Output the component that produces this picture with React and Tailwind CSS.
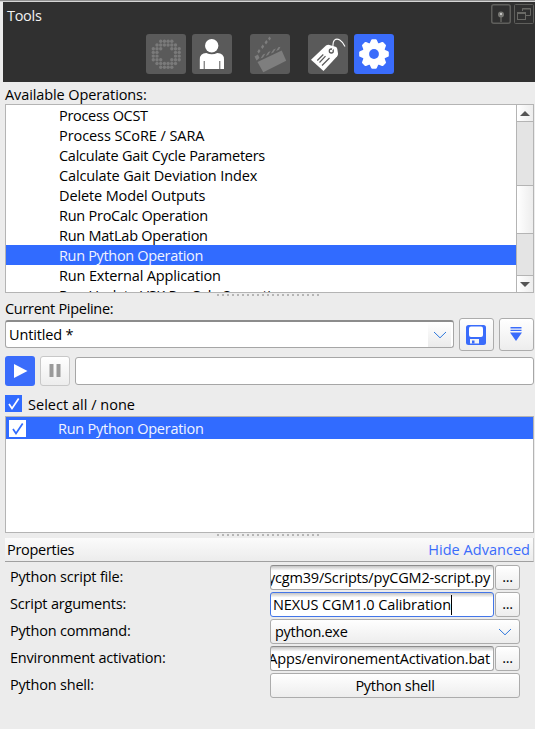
import { useState } from "react";

const operations = [
  ["Process OCST", "tracking-[-0.3px]"],
  ["Process SCoRE / SARA", "tracking-[-0.08px]"],
  ["Calculate Gait Cycle Parameters", "tracking-[-0.26px]"],
  ["Calculate Gait Deviation Index", "tracking-[-0.13px]"],
  ["Delete Model Outputs", "tracking-[-0.13px]"],
  ["Run ProCalc Operation", "tracking-[-0.25px]"],
  ["Run MatLab Operation", "tracking-[-0.25px]"],
  ["Run Python Operation", "tracking-[-0.33px]"],
  ["Run External Application", "tracking-[-0.15px]"],
  ["Run Update VSK ProCalc Operation", "tracking-[-0.25px]"],
];

// Volume ring drawn as rows of dots; x marks a dot.
const ring = [
  "..xxxx..",
  ".xxxxxx.",
  "xxx..xxx",
  "xx....xx",
  "xx....xx",
  "xxx..xxx",
  ".xxxxxx.",
  "..xxxx..",
];

function RingIcon() {
  return (
    <svg width="40" height="40" viewBox="0 0 40 40" fill="#7a7a7a">
      {ring.flatMap((row, y) =>
        [...row].map((c, x) =>
          c === "x" ? <circle key={`${x}-${y}`} cx={7.3 + x * 3.7} cy={7.3 + y * 3.7} r="1.7" /> : null
        )
      )}
    </svg>
  );
}

function PersonIcon() {
  return (
    <svg width="40" height="40" viewBox="0 0 40 40" fill="#fff">
      <circle cx="19.7" cy="11.7" r="6.7" />
      <path d="M7.8 35V25.500q0-6.500 6.500-6.500q5.500 2.500 11 0q6.700 0 6.700 6.500V35H28.300V27H27.300V35H12.700V27H11.700V35Z" />
    </svg>
  );
}

function ClapperIcon() {
  return (
    <svg width="40" height="40" viewBox="0 0 40 40" fill="#7e7e7e">
      <path d="M7.500 28L31.700 16.500L36.200 26.800L13.300 38.300Z" />
      <path d="M4.500 22.500L8 20.500L9.500 24L6.500 26.500Z" />
      <path d="M7.300 17.500L9 15L10.500 17L8.700 19.500ZM11 13L12.700 10.500L14.200 12.500L12.400 15ZM14.600 8.500L16.300 6L17.800 8L16 10.500ZM18 4.500L19.500 2.500L21 4.500L19.500 6.500Z" />
      <path d="M10.500 24.500L13 20.500L15.500 19.500L13 23.500ZM15.700 22L18.200 18L20.700 17L18.200 21ZM20.900 19.500L23.400 15.500L25.900 14.500L23.400 18.500ZM26.100 17L28.300 13.300L30.500 12.800L29 15.700Z" />
    </svg>
  );
}

function TagIcon() {
  return (
    <svg width="40" height="40" viewBox="0 0 40 40" fill="none">
      <path d="M3 25.800L18 11.600Q19 10.700 20.500 10.700L27.500 12.800Q29 13.300 29.300 15L30 19.500Q30.200 21 29.200 22.200L15.500 37Z" fill="#fff" />
      <circle cx="23.300" cy="17" r="2" stroke="#5a5a5a" strokeWidth="1.300" />
      <path d="M9.300 26.500L15.300 20.500M11.500 28.500L17.500 22.200M14 31.500L21.500 24" stroke="#5a5a5a" strokeWidth="1.200" />
      <path d="M24.500 16C25.500 13 24 8.500 26.500 6.200C29.500 3.500 34 6.500 37 12.500" stroke="#fff" strokeWidth="1.100" />
    </svg>
  );
}

function GearIcon() {
  return (
    <svg width="40" height="40" viewBox="0 0 40 40">
      <g transform="translate(20 20)">
        <circle r="11.300" fill="#fff" />
        {[0, 45, 90, 135, 180, 225, 270, 315].map((a) => (
          <path key={a} transform={`rotate(${a})`} d="M-4.800 -9.500L-2.800 -14Q-2.500 -14.800 -1.700 -14.800H1.700Q2.500 -14.800 2.800 -14L4.800 -9.500Z" fill="#fff" />
        ))}
        <circle r="4.900" fill="#3a6cfb" />
      </g>
    </svg>
  );
}

function Check({ inverse }) {
  return (
    <svg width="17" height="17" viewBox="0 0 17 17" className={inverse ? "shrink-0 bg-white" : "shrink-0 bg-[#316bff]"}>
      <path d="M4 9L7 13.500L13.700 3.500" fill="none" stroke={inverse ? "#316bff" : "#fff"} strokeWidth="1.700" />
    </svg>
  );
}

function Grip() {
  return (
    <div className="flex h-[2px] w-full justify-center gap-[3px]">
      {Array.from({ length: 21 }, (_, i) => (
        <i key={i} className="size-[2px] bg-[#b5b5b5]" />
      ))}
    </div>
  );
}

function Chevron() {
  return (
    <svg width="14" height="8" viewBox="0 0 14 8" fill="none" stroke="#2f78dc" strokeWidth="1">
      <path d="M1 1L7 6.800L13 1" />
    </svg>
  );
}

const button = "flex items-center justify-center rounded-[3px] border border-[#acacac] bg-linear-to-b from-white to-[#ededed]";
const field = "flex h-[25px] w-[224px] items-center overflow-hidden rounded-[3px] border bg-linear-to-b from-[#c4c4c4] via-white via-20% to-white";

function Row({ label, children }) {
  return (
    <div className="flex h-[27px] items-start">
      <div className="h-[25px] w-[265px] pl-[5px] leading-[23px] tracking-[-0.2px]">{label}</div>
      {children}
    </div>
  );
}

function Browse() {
  return <button className={`${button} ml-px h-[25px] w-[25px] leading-none`}>...</button>;
}

export default function App() {
  const [all, setAll] = useState(true);
  return (
    <div className="flex h-[729px] w-[535px] flex-col overflow-hidden bg-[#ececec] font-['Open_Sans','Noto_Sans',sans-serif] text-[14.5px] leading-[20px] tracking-[-0.3px] [font-stretch:93%] text-black">
      <div className="h-px shrink-0 bg-[#909090]" />
      <div className="h-px shrink-0 bg-[#d5d5d5]" />
      <header className="ml-[3px] h-[80px] shrink-0 bg-[#303030]">
        <div className="flex h-[32px] justify-between pl-[4px] pr-px pt-[2px] text-[#f2f2f2]">
          <span className="pt-[2px]">Tools</span>
          <div className="flex gap-[3px]">
            <svg width="20" height="20" viewBox="0 0 20 20" fill="none">
              <rect x=".75" y=".75" width="18.500" height="18.500" rx="2" stroke="#5f5f5c" strokeWidth="1.500" />
              <path d="M10 11V18" stroke="#6c6c68" strokeWidth="1.300" />
              <circle cx="10" cy="10.500" r="3" fill="#777773" />
              <circle cx="10" cy="10" r="1" fill="#ddd" />
            </svg>
            <svg width="20" height="20" viewBox="0 0 20 20" fill="none" stroke="#696965">
              <rect x=".5" y=".5" width="19" height="19" rx="1" stroke="#5f5f5c" />
              <path d="M8.500 7V4.500H16.500V11.500H12M8 5H17" />
              <rect x="3.500" y="8.500" width="8" height="7" />
              <path d="M3 9.500H12" />
            </svg>
          </div>
        </div>
        <nav className="flex pl-[143px]">
          <button className="size-10 rounded-[3px] bg-[#5a5a5a]"><RingIcon /></button>
          <button className="ml-[6px] size-10 rounded-[3px] bg-[#5a5a5a]"><PersonIcon /></button>
          <button className="ml-[18px] size-10 rounded-[3px] bg-[#5a5a5a]"><ClapperIcon /></button>
          <button className="ml-[18px] size-10 rounded-[3px] bg-[#5a5a5a]"><TagIcon /></button>
          <button className="ml-[6px] size-10 rounded-[3px] bg-[#3a6cfb]"><GearIcon /></button>
        </nav>
      </header>

      <div className="h-[22px] shrink-0 pl-[5px] pt-[3px] tracking-[-0.1px]">Available Operations:</div>
      <section className="ml-[5px] flex h-[189px] w-[529px] shrink-0 border border-[#b4b4b4] bg-white">
        <ul className="h-full flex-1 overflow-hidden">
          {operations.map(([op, tracking]) => (
            <li key={op} className={`h-5 pl-[53px] leading-[22px] ${tracking} ${op === "Run Python Operation" ? "bg-[#316bff] text-[#f0f3ff]" : ""}`}>
              {op}
            </li>
          ))}
        </ul>
        <div className="flex w-[17px] flex-col border-l border-[#b4b4b4] bg-[#e4e4e4]">
          <div className="flex h-[17px] items-center justify-center border-b border-[#b4b4b4] bg-linear-to-r from-white to-[#ededed]">
            <svg width="10" height="5" viewBox="0 0 10 5"><path d="M0 5L5 0L10 5Z" fill="#555" /></svg>
          </div>
          <div className="mt-[63px] h-[49px] border-y border-[#b4b4b4] bg-linear-to-r from-white to-[#ededed]" />
          <div className="mt-auto flex h-[17px] items-center justify-center border-t border-[#b4b4b4] bg-linear-to-r from-white to-[#ededed]">
            <svg width="10" height="5" viewBox="0 0 10 5"><path d="M0 0L5 5L10 0Z" fill="#555" /></svg>
          </div>
        </div>
      </section>
      <div className="h-[5px] shrink-0 pt-px"><Grip /></div>

      <div className="h-[20px] shrink-0 pl-[5px] leading-[22px]">Current Pipeline:</div>
      <div className="flex h-[33px] shrink-0 items-start pl-[5px]">
        <div className="mt-[2px] flex h-[28px] w-[449px] items-center justify-between rounded-[3px] border border-t-2 border-[#a6a6a6] border-t-[#8c8c8c] bg-white pl-[3px] pr-[2px]">
          <span className="tracking-[-0.15px]">Untitled *</span>
          <div className="flex h-full w-[23px] items-center justify-center bg-linear-to-b from-white to-[#ebebeb]"><Chevron /></div>
        </div>
        <button className={`${button} ml-[5px] h-[33px] w-[35px] pr-px`}>
          <svg width="20" height="20" viewBox="0 0 20 20">
            <rect width="20" height="20" rx="2.500" fill="#3a6cfb" />
            <rect x="3" y="1.500" width="14" height="10.500" rx="2" fill="#fff" />
            <rect x="4" y="14" width="9" height="4.500" fill="#f4f4f4" />
            <rect x="6" y="15.500" width="2.500" height="3" fill="#3a6cfb" />
          </svg>
        </button>
        <button className={`${button} ml-[5px] h-[33px] w-[35px] pr-px pb-px`}>
          <svg width="12" height="14" viewBox="0 0 12 14" fill="#3a6cfb">
            <path d="M.500 0H11.500V1H.500ZM.500 3H11.500V4H.500ZM0 5.500H12L6 14Z" />
            <path d="M.500 1H11.500V2.500H.500Z" opacity=".5" />
          </svg>
        </button>
      </div>
      <div className="flex h-[44px] shrink-0 items-start pl-[5px] pt-[5px]">
        <button className="flex size-[30px] items-center justify-center rounded-[3px] bg-[#3a6cfb]">
          <svg width="14" height="14" viewBox="0 0 14 14" className="ml-[2px]"><path d="M0 0L13.500 7L0 14Z" fill="#fff" /></svg>
        </button>
        <button className="ml-[5px] flex size-[30px] items-center justify-center rounded-[3px] border border-[#c8c8c8] bg-linear-to-b from-white to-[#ededed] pb-[2px]">
          <svg width="12" height="13" viewBox="0 0 12 13"><path d="M.500 0H4.500V13H.500ZM7.500 0H11.500V13H7.500Z" fill="#9a9a9a" /></svg>
        </button>
        <input readOnly className="ml-[5px] mt-px h-[28px] w-[459px] rounded-[3px] border border-[#a6a6a6] bg-white outline-none" />
      </div>
      <label className="flex h-[21px] shrink-0 items-start pl-[5px]" onClick={() => setAll(!all)}>
        <Check />
        <span className="ml-[6px] tracking-[0.02px]">Select all / none</span>
      </label>

      <section className="ml-[5px] h-[117px] w-[529px] shrink-0 border border-[#b4b4b4] bg-white">
        <div className="flex h-[22px] items-center bg-[#316bff] pl-[3px] pt-px text-[#f0f3ff]">
          <Check inverse />
          <span className="ml-[32px] tracking-[-0.25px]">Run Python Operation</span>
        </div>
      </section>
      <div className="h-[5px] shrink-0 pt-px"><Grip /></div>

      <div className="ml-[5px] flex h-[24px] w-[529px] shrink-0 items-center justify-between border-b border-r border-[#a0a0a0] border-r-[#cccccc] bg-linear-to-b from-[#fbfbfb] to-[#ececec] pl-[2px] pr-[3px] leading-[22px]">
        <span className="pt-px">Properties</span>
        <a className="pt-px tracking-[0.03px] text-[#3a6cfb]">Hide Advanced</a>
      </div>
      <main className="pl-[5px] pt-[3px]">
        <Row label="Python script file:">
          <div className={`${field} justify-end border-[#a6a6a6] border-t-[#8c8c8c] pr-[3px]`}>
            <span className="whitespace-nowrap tracking-[-0.17px]">ycgm39/Scripts/pyCGM2-script.py</span>
          </div>
          <Browse />
        </Row>
        <Row label="Script arguments:">
          <div className={`${field} border-[#4476e8] pl-[2px]`}>
            <span className="whitespace-nowrap pt-px tracking-[-0.1px]">NEXUS CGM1.0 Calibration</span>
            <i className="h-[20px] w-px bg-black" />
          </div>
          <Browse />
        </Row>
        <Row label="Python command:">
          <div className={`${button} h-[25px] w-[250px] justify-between! pl-[4px] pr-[7px]`}>
            <span className="pt-px">python.exe</span>
            <Chevron />
          </div>
        </Row>
        <Row label="Environment activation:">
          <div className={`${field} justify-end border-[#a6a6a6] border-t-[#8c8c8c] pr-[3px]`}>
            <span className="whitespace-nowrap tracking-[-0.17px]">Apps/environementActivation.bat</span>
          </div>
          <Browse />
        </Row>
        <Row label="Python shell:">
          <button className={`${button} h-[25px] w-[250px] pt-px`}>Python shell</button>
        </Row>
      </main>
    </div>
  );
}
